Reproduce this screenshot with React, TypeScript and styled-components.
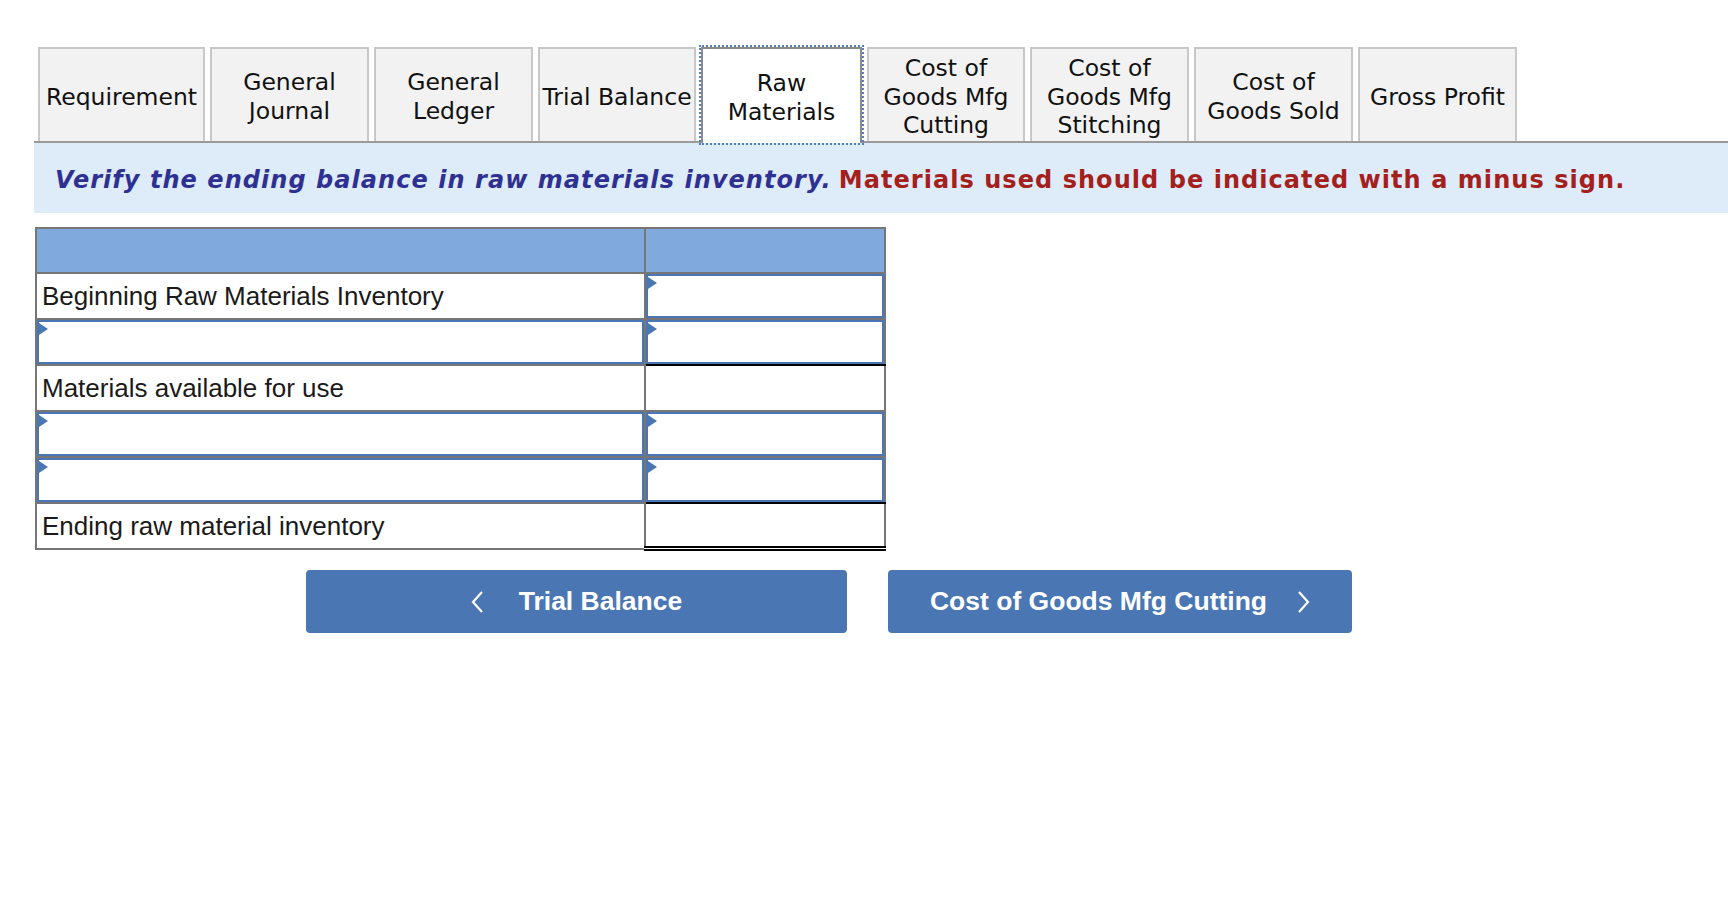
import styled, { createGlobalStyle } from 'styled-components'

const GlobalStyle = createGlobalStyle`
  html, body {
    margin: 0;
    padding: 0;
    background: #ffffff;
  }
  body {
    font-family: "Liberation Sans", Arial, sans-serif;
    color: #1a1a1a;
  }
`

const Page = styled.main`
  padding: 47px 0 0 34px;
`

const TabBar = styled.nav`
  display: flex;
  align-items: flex-start;
  gap: 5px;
  padding-left: 4px;
  border-bottom: 2px solid #9a9a9a;
  height: 94px;
`

const Tab = styled.button<{ $active?: boolean; $width?: number }>`
  box-sizing: border-box;
  width: ${({ $width }) => $width ?? 159}px;
  height: ${({ $active }) => ($active ? 96 : 94)}px;
  padding: 4px 2px 0;
  display: flex;
  align-items: center;
  justify-content: center;
  border: 2px solid ${({ $active }) => ($active ? '#8a8a8a' : '#c8c8c8')};
  border-bottom: none;
  background: ${({ $active }) => ($active ? '#ffffff' : '#f2f2f2')};
  color: #111;
  font-family: "DejaVu Sans", Verdana, sans-serif;
  font-size: 23.5px;
  line-height: 28.7px;
  text-align: center;
  white-space: nowrap;
  position: relative;
  z-index: ${({ $active }) => ($active ? 1 : 0)};
  outline: ${({ $active }) => ($active ? '2px dotted #4f7fc6' : 'none')};
  outline-offset: 0px;
  cursor: pointer;
`

const Banner = styled.div`
  box-sizing: border-box;
  height: 70px;
  display: flex;
  align-items: center;
  padding: 4px 0 0 21px;
  background: #deebf8;
  font-family: "DejaVu Sans", Verdana, sans-serif;
  font-size: 24px;
  font-weight: 700;
  letter-spacing: 1.05px;
  white-space: nowrap;
`

const Lead = styled.span`
  color: #2e3192;
  font-style: italic;
`

const Note = styled.span`
  color: #a4201d;
  margin-left: 0.3em;
`

const Table = styled.table`
  margin: 14px 0 0 1px;
  width: 845px;
  border-collapse: collapse;
  border: 2px solid #767676;
  table-layout: fixed;
  font-family: "Liberation Sans", Arial, sans-serif;
  font-size: 26px;
`

const HeadCell = styled.th<{ $width: number }>`
  width: ${({ $width }) => $width}px;
  height: 43px;
  padding: 0;
  background: #80aade;
  border: 2px solid #767676;
`

const Cell = styled.td<{ $underline?: boolean; $double?: boolean; $compact?: boolean }>`
  height: ${({ $compact }) => ($compact ? 42 : 44)}px;
  padding: 0;
  border: 2px solid #767676;
  border-bottom: ${({ $underline, $double }) =>
    $double ? '5px double #000' : $underline ? '2px solid #000' : '2px solid #767676'};
  vertical-align: middle;
`

const Label = styled.div`
  padding-left: 5px;
  color: #1a1a1a;
  line-height: 42px;
`

const InputBox = styled.div`
  position: relative;
  box-sizing: border-box;
  height: 44px;
  border: 2px solid #4a76b4;
  background: #fff;

  &::before {
    content: '';
    position: absolute;
    left: 0;
    top: 1px;
    border-left: 9px solid #4a76b4;
    border-top: 6.5px solid transparent;
    border-bottom: 6.5px solid transparent;
  }
`

const ButtonRow = styled.div`
  display: flex;
  gap: 41px;
  margin-top: 19px;
  padding-left: 272px;
`

const NavButton = styled.button<{ $width: number; $gap: number }>`
  box-sizing: border-box;
  width: ${({ $width }) => $width}px;
  height: 63px;
  display: flex;
  align-items: center;
  justify-content: center;
  gap: ${({ $gap }) => $gap}px;
  border: none;
  border-radius: 4px;
  background: #4a76b4;
  color: #ffffff;
  font-family: "Liberation Sans", Arial, sans-serif;
  font-size: 26.5px;
  font-weight: 700;
  cursor: pointer;
`

function Chevron({ dir }: { dir: 'left' | 'right' }) {
  const points = dir === 'left' ? '11,1 2,11 11,21' : '2,1 11,11 2,21'
  return (
    <svg width="13" height="22" viewBox="0 0 13 22" aria-hidden="true">
      <polyline points={points} fill="none" stroke="#fff" strokeWidth="2.2" />
    </svg>
  )
}

const tabs: { label: string[]; width?: number; active?: boolean }[] = [
  { label: ['Requirement'], width: 167 },
  { label: ['General', 'Journal'] },
  { label: ['General', 'Ledger'] },
  { label: ['Trial Balance'], width: 158 },
  { label: ['Raw', 'Materials'], width: 161, active: true },
  { label: ['Cost of', 'Goods Mfg', 'Cutting'], width: 158 },
  { label: ['Cost of', 'Goods Mfg', 'Stitching'] },
  { label: ['Cost of', 'Goods Sold'], width: 159 },
  { label: ['Gross Profit'], width: 159 },
]

type Row =
  | { kind: 'label'; text: string; input?: boolean; double?: boolean }
  | { kind: 'input'; underline?: boolean }

const rows: Row[] = [
  { kind: 'label', text: 'Beginning Raw Materials Inventory', input: true },
  { kind: 'input', underline: true },
  { kind: 'label', text: 'Materials available for use' },
  { kind: 'input' },
  { kind: 'input', underline: true },
  { kind: 'label', text: 'Ending raw material inventory', double: true },
]

export default function App() {
  return (
    <Page>
      <GlobalStyle />
      <TabBar>
        {tabs.map((t) => (
          <Tab key={t.label.join(' ')} $width={t.width} $active={t.active}>
            <span>
              {t.label.map((line, i) => (
                <span key={line}>
                  {i > 0 && <br />}
                  {line}
                </span>
              ))}
            </span>
          </Tab>
        ))}
      </TabBar>

      <Banner>
        <Lead>Verify the ending balance in raw materials inventory.</Lead>
        <Note>Materials used should be indicated with a minus sign.</Note>
      </Banner>

      <Table>
        <thead>
          <tr>
            <HeadCell $width={607} />
            <HeadCell $width={238} />
          </tr>
        </thead>
        <tbody>
          {rows.map((r, i) =>
            r.kind === 'label' ? (
              <tr key={i}>
                <Cell $compact={r.double}>
                  <Label>{r.text}</Label>
                </Cell>
                <Cell $compact={r.double} $double={r.double}>
                  {r.input && <InputBox />}
                </Cell>
              </tr>
            ) : (
              <tr key={i}>
                <Cell>
                  <InputBox />
                </Cell>
                <Cell $underline={r.underline}>
                  <InputBox />
                </Cell>
              </tr>
            )
          )}
        </tbody>
      </Table>

      <ButtonRow>
        <NavButton $width={541} $gap={35}>
          <Chevron dir="left" />
          <span>Trial Balance</span>
        </NavButton>
        <NavButton $width={464} $gap={30}>
          <span>Cost of Goods Mfg Cutting</span>
          <Chevron dir="right" />
        </NavButton>
      </ButtonRow>
    </Page>
  )
}
